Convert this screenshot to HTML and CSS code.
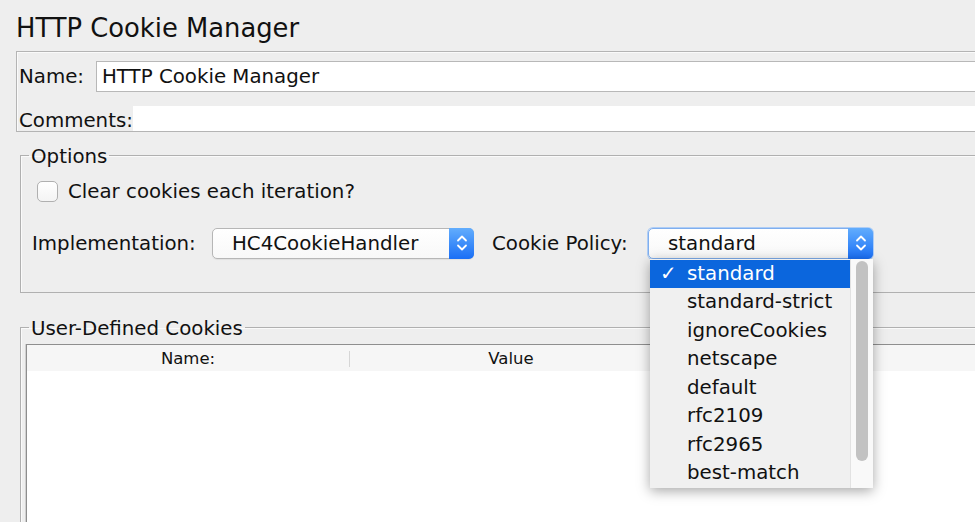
FILE: index.html
```html
<!DOCTYPE html>
<html lang="en">
<head>
    <meta charset="UTF-8">
    <meta name="viewport" content="width=device-width, initial-scale=1.0">
    <title>HTTP Cookie Manager</title>
    <link rel="stylesheet" href="styles.css">
</head>
<body>
    <div id="page">
        <h1 class="title">HTTP Cookie Manager</h1>

        <div class="name-panel">
            <div class="field-row">
                <label class="name-label" for="name">Name:</label>
                <input class="text-input" id="name" type="text" value="HTTP Cookie Manager">
            </div>
            <div class="field-row comments-row">
                <label class="comments-label" for="comments">Comments:</label>
                <div class="comments-input" id="comments"></div>
            </div>
        </div>

        <fieldset class="group options">
            <legend>Options</legend>
            <label class="check-row">
                <span class="checkbox"></span>
                Clear cookies each iteration?
            </label>
            <div class="select-row">
                <span class="impl-label">Implementation:</span>
                <div class="combo combo-impl">
                    <span class="combo-value">HC4CookieHandler</span>
                    <span class="combo-arrow">
                        <svg width="14" height="24" viewBox="0 0 14 24"><path d="M3 9.5 L7 5.5 L11 9.5 M3 14.5 L7 18.5 L11 14.5" fill="none" stroke="#fff" stroke-width="1.8" stroke-linecap="round" stroke-linejoin="round"/></svg>
                    </span>
                </div>
                <span class="policy-label">Cookie Policy:</span>
                <div class="combo combo-policy focused">
                    <span class="combo-value">standard</span>
                    <span class="combo-arrow">
                        <svg width="14" height="24" viewBox="0 0 14 24"><path d="M3 9.5 L7 5.5 L11 9.5 M3 14.5 L7 18.5 L11 14.5" fill="none" stroke="#fff" stroke-width="1.8" stroke-linecap="round" stroke-linejoin="round"/></svg>
                    </span>
                    <!-- open popup of the policy combo -->
                    <div class="popup">
                        <ul class="popup-list">
                            <li class="selected"><span class="tick">✓</span>standard</li>
                            <li>standard-strict</li>
                            <li>ignoreCookies</li>
                            <li>netscape</li>
                            <li>default</li>
                            <li>rfc2109</li>
                            <li>rfc2965</li>
                            <li>best-match</li>
                        </ul>
                        <div class="popup-scroll"><div class="thumb"></div></div>
                    </div>
                </div>
            </div>
        </fieldset>

        <fieldset class="group cookies">
            <legend>User-Defined Cookies</legend>
            <div class="table">
                <div class="table-head">
                    <div class="th">Name:</div>
                    <div class="th">Value</div>
                    <div class="th"></div>
                </div>
                <div class="table-body"></div>
            </div>
        </fieldset>
    </div>
</body>
</html>
```

FILE: styles.css
```css
html, body {
    margin: 0;
    padding: 0;
    overflow: hidden;
}
body {
    background: #eeeeee;
    color: #111;
    font-family: 'DejaVu Sans', sans-serif;
    font-size: 19.8px;
    width: 975px;
    height: 522px;
}
#page {
    padding-left: 16px;
    width: 980px;
}
.title {
    margin: 13px 0 0 0;
    font-size: 25.8px;
    font-weight: normal;
    line-height: 30px;
}

/* name / comments */
.name-panel {
    margin-top: 8px;
    border: 1px solid #b4b4b4;
    box-shadow: inset 1px 1px 0 #fafafa;
    padding: 9px 0 0 2px;
}
.field-row {
    display: flex;
    align-items: center;
    height: 31px;
}
.name-label {
    width: 77px;
}
.text-input {
    flex: 1;
    height: 31px;
    box-sizing: border-box;
    border: 1px solid #b8b8b8;
    background: #fff;
    font: inherit;
    color: #111;
    padding: 0 0 0 5px;
    outline: none;
}
.comments-row {
    margin-top: 14px;
    height: 25px;
}
.comments-label {
    width: 114px;
    padding-top: 3px;
}
.comments-input {
    flex: 1;
    height: 25px;
    background: #fff;
}

/* groups */
.group {
    margin: 0 0 0 4px;
    border: 1px solid #b0b0b0;
    box-shadow: inset 1px 1px 0 #fafafa;
    padding: 0 0 0 8px;
}
.group legend {
    padding: 4px 2px 0 2px;
    line-height: 22px;
}
.options {
    margin-top: 10px;
    padding-top: 12px;
    padding-bottom: 33px;
}
.check-row {
    display: flex;
    align-items: center;
    height: 22px;
    margin-left: 8px;
}
.checkbox {
    width: 21px;
    height: 21px;
    box-sizing: border-box;
    border: 1px solid #b0b0b0;
    border-radius: 5px;
    background: linear-gradient(#ffffff, #f4f4f4);
    margin-right: 10px;
}
.select-row {
    display: flex;
    align-items: center;
    gap: 16px;
    margin-top: 25px;
    padding-left: 3px;
    height: 32px;
}
.impl-label {
    width: 164px;
}
.policy-label {
    width: 142px;
    padding-left: 2px;
    box-sizing: border-box;
}
.combo {
    position: relative;
    display: flex;
    height: 31px;
    box-sizing: border-box;
    border: 1px solid #b6b6b6;
    border-radius: 5px;
    background: linear-gradient(#ffffff, #f8f8f8);
    box-shadow: 0 1px 1px rgba(0, 0, 0, 0.06);
}
.combo-impl {
    width: 262px;
}
.combo-policy {
    width: 225px;
}
.combo.focused {
    border-color: #7faeee;
    box-shadow: 0 0 0 1px #aecdf6;
}
.combo-value {
    flex: 1;
    padding-left: 19px;
    line-height: 29px;
}
.combo-arrow {
    width: 25px;
    margin: -1px -1px -1px 0;
    border-radius: 0 5px 5px 0;
    background: linear-gradient(#62adfd, #1a6ff6);
    display: flex;
    align-items: center;
    justify-content: center;
}

/* popup */
.popup {
    position: absolute;
    top: 30px;
    left: 1px;
    width: 223px;
    height: 229px;
    display: flex;
    background: #f0f0f0;
    box-shadow: 0 3px 12px rgba(0, 0, 0, 0.35);
    z-index: 5;
}
.popup-list {
    list-style: none;
    margin: 0;
    padding: 1px 0 0 0;
    width: 200px;
}
.popup-list li {
    height: 28.5px;
    line-height: 28px;
    padding-left: 37px;
    white-space: nowrap;
}
.popup-list li.selected {
    background: #0b66dd;
    color: #fff;
    padding-left: 10px;
}
.tick {
    display: inline-block;
    width: 27px;
}
.popup-scroll {
    flex: 1;
    border-left: 1px solid #e2e2e2;
    background: #f9f9f9;
    padding: 2px 0 0 5px;
}
.thumb {
    width: 12px;
    height: 200px;
    border-radius: 6px;
    background: #c2c2c2;
}

/* cookies table */
.cookies {
    margin-top: 21px;
    padding-top: 4px;
}
.table {
    margin-left: -3px;
    border-top: 1px solid #8e8e8e;
    border-left: 1px solid #8e8e8e;
    box-shadow: -1px 0 0 #d0d0d0;
}
.table-head {
    display: flex;
    background: #f6f6f6;
    padding: 6px 0 4px 0;
    font-size: 16.5px;
}
.th {
    width: 323px;
    box-sizing: border-box;
    border-right: 1px solid #d6d6d6;
    text-align: center;
    line-height: 16px;
    height: 16px;
}
.table-body {
    height: 200px;
    background: #fff;
}
```
